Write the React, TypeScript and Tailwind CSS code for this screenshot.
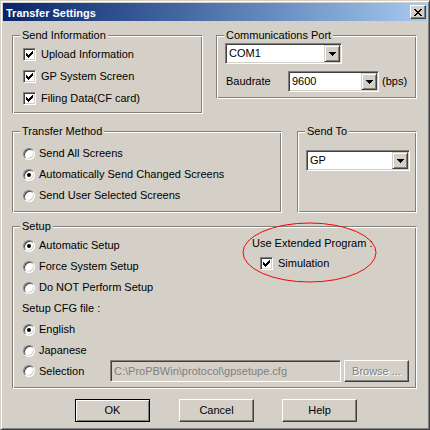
import React from 'react';

const SUNKEN =
  'border border-t-[#808080] border-l-[#808080] border-r-white border-b-white shadow-[inset_1px_1px_0_#404040,inset_-1px_-1px_0_#d4d0c8]';

function Check({ checked = true }: { checked?: boolean }) {
  return (
    <span className={`w-[13px] h-[13px] shrink-0 flex items-center justify-center bg-white ${SUNKEN}`}>
      {checked && (
        <svg width="7" height="7" viewBox="0 0 7 7" shapeRendering="crispEdges">
          <rect x="6" y="0" width="1" height="1" />
          <rect x="5" y="1" width="2" height="1" />
          <rect x="0" y="2" width="1" height="1" />
          <rect x="4" y="2" width="3" height="1" />
          <rect x="0" y="3" width="2" height="1" />
          <rect x="3" y="3" width="3" height="1" />
          <rect x="0" y="4" width="5" height="1" />
          <rect x="1" y="5" width="3" height="1" />
          <rect x="2" y="6" width="1" height="1" />
        </svg>
      )}
    </span>
  );
}

function Radio({ on = false }: { on?: boolean }) {
  return (
    <span className={`w-[12px] h-[12px] shrink-0 rounded-full flex items-center justify-center bg-white ${SUNKEN}`}>
      {on && <span className="w-[4px] h-[4px] rounded-full bg-black" />}
    </span>
  );
}

function Arrow() {
  return (
    <svg width="7" height="4" viewBox="0 0 7 4" shapeRendering="crispEdges">
      <rect x="0" y="0" width="7" height="1" />
      <rect x="1" y="1" width="5" height="1" />
      <rect x="2" y="2" width="3" height="1" />
      <rect x="3" y="3" width="1" height="1" />
    </svg>
  );
}

function Combo({ value, className }: { value: string; className: string }) {
  return (
    <div className={`flex h-[21px] bg-white p-[1px] ${SUNKEN} ${className}`}>
      <span className="flex-1 pl-[2px] leading-[17px] text-black">{value}</span>
      <span className="w-[16px] h-[17px] flex items-center justify-center bg-[#d4d0c8] border border-t-[#d4d0c8] border-l-[#d4d0c8] border-r-[#404040] border-b-[#404040] shadow-[inset_1px_1px_0_#fff,inset_-1px_-1px_0_#808080]">
        <Arrow />
      </span>
    </div>
  );
}

function Group({ label, className, children }: { label: string; className: string; children?: React.ReactNode }) {
  return (
    <div
      className={`relative border border-t-[#808080] border-l-[#808080] border-r-white border-b-white shadow-[inset_1px_1px_0_#fff,inset_-1px_-1px_0_#808080] ${className}`}
    >
      <span className="absolute left-[7px] top-[-7px] px-[2px] bg-[#d4d0c8] leading-[13px] whitespace-nowrap">
        {label}
      </span>
      {children}
    </div>
  );
}

function CheckRow({ label, h = 'h-[22px]' }: { label: string; h?: string }) {
  return (
    <div className={`flex items-center gap-[5px] ${h}`}>
      <Check />
      <span>{label}</span>
    </div>
  );
}

function RadioRow({ label, on }: { label: string; on?: boolean }) {
  return (
    <div className="flex items-center gap-[4px] h-[21px]">
      <Radio on={on} />
      <span className="whitespace-nowrap">{label}</span>
    </div>
  );
}

function Button({ label, def }: { label: string; def?: boolean }) {
  return (
    <div
      className={`w-[75px] h-[23px] flex items-center justify-center bg-[#d4d0c8] ${
        def
          ? 'border border-black shadow-[inset_1px_1px_0_#fff,inset_-1px_-1px_0_#808080]'
          : 'border border-t-white border-l-white border-r-[#404040] border-b-[#404040] shadow-[inset_-1px_-1px_0_#808080]'
      }`}
    >
      {label}
    </div>
  );
}

export default function App() {
  return (
    <div className="w-[430px] h-[430px] p-[2px] bg-[#d4d0c8] border border-t-[#d4d0c8] border-l-[#d4d0c8] border-r-[#404040] border-b-[#404040] shadow-[inset_1px_1px_0_#fff,inset_-1px_-1px_0_#808080] font-['Liberation_Sans',Arial,sans-serif] text-[11px] text-black">
      {/* title bar */}
      <div className="h-[18px] flex items-start bg-gradient-to-r from-[#0a246a] to-[#a6caf0]">
        <span className="flex-1 pl-[3px] pt-[2px] leading-[16px] font-bold text-white">Transfer Settings</span>
        <span className="mt-[2px] mr-[1px] w-[16px] h-[14px] flex items-center justify-center bg-[#d4d0c8] border border-t-white border-l-white border-r-[#404040] border-b-[#404040] shadow-[inset_-1px_-1px_0_#808080]">
          <svg width="8" height="7" viewBox="0 0 8 7" shapeRendering="crispEdges">
            <rect x="0" y="0" width="2" height="1" />
            <rect x="6" y="0" width="2" height="1" />
            <rect x="1" y="1" width="2" height="1" />
            <rect x="5" y="1" width="2" height="1" />
            <rect x="2" y="2" width="4" height="1" />
            <rect x="3" y="3" width="2" height="1" />
            <rect x="2" y="4" width="4" height="1" />
            <rect x="1" y="5" width="2" height="1" />
            <rect x="5" y="5" width="2" height="1" />
            <rect x="0" y="6" width="2" height="1" />
            <rect x="6" y="6" width="2" height="1" />
          </svg>
        </span>
      </div>

      {/* client area */}
      <div className="pl-[9px] flex flex-col">
        <div className="flex items-start mt-[14px]">
          <Group label="Send Information" className="w-[191px] h-[79px] pt-[7px] pl-[10px]">
            <CheckRow label="Upload Information" />
            <CheckRow label="GP System Screen" />
            <CheckRow label="Filing Data(CF card)" />
          </Group>
          <Group label="Communications Port" className="ml-[13px] w-[201px] h-[64px] pt-[7px] pl-[8px]">
            <Combo value="COM1" className="w-[117px]" />
            <div className="flex items-center mt-[7px]">
              <span className="w-[63px] pl-[1px]">Baudrate</span>
              <Combo value="9600" className="w-[91px]" />
              <span className="ml-[3px]">(bps)</span>
            </div>
          </Group>
        </div>

        <div className="flex items-start mt-[17px]">
          <Group label="Transfer Method" className="w-[270px] h-[82px] pt-[11px] pl-[10px]">
            <RadioRow label="Send All Screens" />
            <RadioRow label="Automatically Send Changed Screens" on />
            <RadioRow label="Send User Selected Screens" />
          </Group>
          <Group label="Send To" className="ml-[15px] w-[120px] h-[82px] pt-[18px] pl-[8px]">
            <Combo value="GP" className="w-[104px]" />
          </Group>
        </div>

        <Group label="Setup" className="mt-[13px] w-[405px] h-[163px] pt-[8px] pl-[10px]">
          <div className="flex">
            <div className="w-[229px] flex flex-col">
              <RadioRow label="Automatic Setup" on />
              <RadioRow label="Force System Setup" />
              <RadioRow label="Do NOT Perform Setup" />
            </div>
            <div className="flex flex-col">
              <span className="h-[16px] leading-[16px]">Use Extended Program :</span>
              <div className="mt-[5px] ml-[8px]">
                <CheckRow label="Simulation" h="h-[15px]" />
              </div>
            </div>
          </div>
          <div className="h-[21px] flex items-center -ml-[1px]">Setup CFG file :</div>
          <RadioRow label="English" on />
          <RadioRow label="Japanese" />
          <div className="flex items-center h-[22px] -mt-[1px]">
            <Radio />
            <span className="ml-[4px] w-[71px]">Selection</span>
            <div className={`w-[231px] h-[22px] pl-[3px] flex items-center bg-[#d4d0c8] text-[#808080] ${SUNKEN}`}>
              C:\ProPBWin\protocol\gpsetupe.cfg
            </div>
            <div className="ml-[3px] w-[65px] h-[22px] flex items-center justify-center text-[#808080] [text-shadow:1px_1px_0_#fff] border border-t-white border-l-white border-r-[#404040] border-b-[#404040] shadow-[inset_-1px_-1px_0_#808080]">
              Browse ...
            </div>
          </div>
          <svg className="absolute left-[229px] top-[-5px]" width="135" height="61" viewBox="0 0 135 61">
            <ellipse cx="67.5" cy="30.5" rx="66.5" ry="29.5" fill="none" stroke="#ff0000" strokeWidth="1" />
          </svg>
        </Group>

        <div className="flex mt-[10px] pl-[63px]">
          <Button label="OK" def />
          <div className="ml-[29px]">
            <Button label="Cancel" />
          </div>
          <div className="ml-[28px]">
            <Button label="Help" />
          </div>
        </div>
      </div>
    </div>
  );
}
